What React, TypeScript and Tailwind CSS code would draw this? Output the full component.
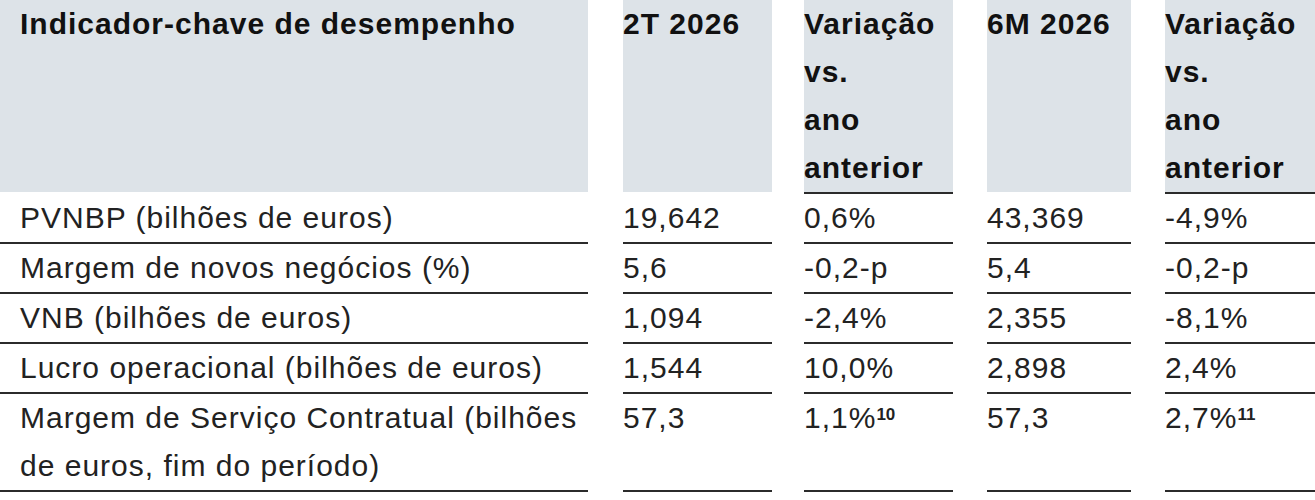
const cols = [
  "w-[588px] pl-[20px]",
  "ml-[35px] w-[149px]",
  "ml-[32px] w-[149px]",
  "ml-[34px] w-[144px]",
  "ml-[34px] w-[150px]",
];

interface Row {
  label: React.ReactNode;
  values: React.ReactNode[];
}

const rows: Row[] = [
  { label: "PVNBP (bilhões de euros)", values: ["19,642", "0,6%", "43,369", "-4,9%"] },
  { label: "Margem de novos negócios (%)", values: ["5,6", "-0,2-p", "5,4", "-0,2-p"] },
  { label: "VNB (bilhões de euros)", values: ["1,094", "-2,4%", "2,355", "-8,1%"] },
  { label: "Lucro operacional (bilhões de euros)", values: ["1,544", "10,0%", "2,898", "2,4%"] },
  {
    label: (
      <>
        Margem de Serviço Contratual (bilhões
        <br />
        de euros, fim do período)
      </>
    ),
    values: [
      "57,3",
      <>
        1,1%<sup className="text-[17px] font-bold tracking-normal">10</sup>
      </>,
      "57,3",
      <>
        2,7%<sup className="text-[17px] font-bold tracking-normal">11</sup>
      </>,
    ],
  },
];

function HeaderCell({ col, dark, children }: { col: number; dark?: boolean; children: React.ReactNode }) {
  return (
    <div
      className={`${cols[col]} bg-[#dde3e8] border-b-2 ${dark ? "border-[#2b2b2b]" : "border-white"} font-bold text-[#111]`}
    >
      {children}
    </div>
  );
}

export default function App() {
  return (
    <div
      className="w-[1315px] h-[500px] overflow-hidden bg-white text-[30px] leading-[48px] tracking-[1px] text-[#222]"
      style={{ fontFamily: '"Liberation Sans", Arial, sans-serif' }}
    >
      {/* header */}
      <div className="flex">
        <HeaderCell col={0}>Indicador-chave de desempenho</HeaderCell>
        <HeaderCell col={1}>2T 2026</HeaderCell>
        <HeaderCell col={2} dark>
          Variação
          <br />
          vs.
          <br />
          ano
          <br />
          anterior
        </HeaderCell>
        <HeaderCell col={3}>6M 2026</HeaderCell>
        <HeaderCell col={4} dark>
          Variação
          <br />
          vs.
          <br />
          ano
          <br />
          anterior
        </HeaderCell>
      </div>
      {/* body */}
      {rows.map((row, i) => (
        <div key={i} className="flex">
          <div className={`${cols[0]} border-b-2 border-[#2b2b2b] whitespace-nowrap`}>{row.label}</div>
          {row.values.map((v, j) => (
            <div key={j} className={`${cols[j + 1]} border-b-2 border-[#2b2b2b] whitespace-nowrap`}>
              {v}
            </div>
          ))}
        </div>
      ))}
    </div>
  );
}
